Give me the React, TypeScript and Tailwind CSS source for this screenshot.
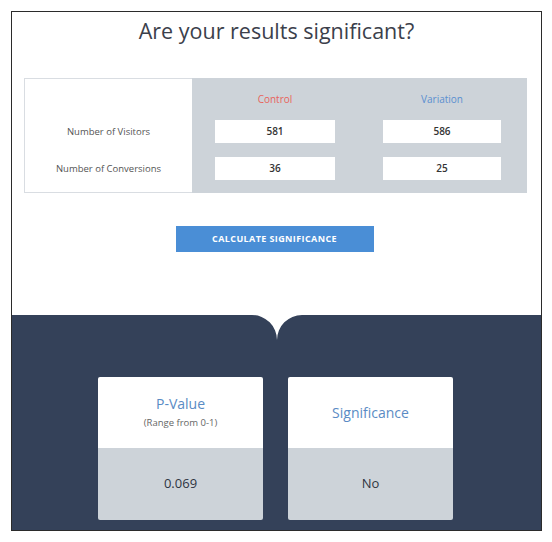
const font = { fontFamily: '"Open Sans", "Noto Sans", sans-serif' }

function ValueBox({ value, w }: { value: string; w: string }) {
  return (
    <div className={`flex h-[23px] items-center justify-center bg-white text-[10px] font-semibold text-[#333] ${w}`}>
      {value}
    </div>
  )
}

function ResultCard({ title, sub, value }: { title: string; sub?: string; value: string }) {
  return (
    <div className="flex h-[143px] w-[165px] flex-col overflow-hidden rounded-[2px]">
      <div className="flex h-[71px] flex-col items-center justify-center bg-white">
        <span className="text-[14px] leading-none text-[#5a8bc4]">{title}</span>
        {sub ? <span className="mt-[7px] text-[9.5px] leading-none text-[#666]">{sub}</span> : null}
      </div>
      <div className="flex flex-1 items-center justify-center bg-[#cdd3d9] text-[13px] text-[#2f3542]">
        {value}
      </div>
    </div>
  )
}

export default function App() {
  return (
    <div className="min-h-[542px] w-[552px] bg-white pl-[11px] pt-[11px]" style={font}>
      <div className="flex h-[520px] w-[531px] flex-col border border-[#2b2b2b] bg-white">
        <h1 className="mt-[5px] text-center text-[21.5px] leading-[28px] text-[#3b404b]">
          Are your results significant?
        </h1>
        <div className="ml-[12px] mt-[33px] flex h-[115px] w-[503px]">
          <div className="flex w-[168px] flex-col items-center border border-r-0 border-[#d9dde2] pt-[46px] text-[9.5px] text-[#555]">
            <span className="leading-[14px]">Number of Visitors</span>
            <span className="mt-[23px] leading-[14px]">Number of Conversions</span>
          </div>
          <div className="flex flex-1 gap-[48px] bg-[#cdd3d9] pl-[23px] pt-[14px]">
            <div className="flex flex-col items-center">
              <span className="text-[10px] leading-[14px] text-[#e8645c]">Control</span>
              <div className="mt-[14px]"><ValueBox value="581" w="w-[120px]" /></div>
              <div className="mt-[14px]"><ValueBox value="36" w="w-[120px]" /></div>
            </div>
            <div className="flex flex-col items-center">
              <span className="text-[10px] leading-[14px] text-[#5a8fd0]">Variation</span>
              <div className="mt-[14px]"><ValueBox value="586" w="w-[118px]" /></div>
              <div className="mt-[14px]"><ValueBox value="25" w="w-[118px]" /></div>
            </div>
          </div>
        </div>
        <div className="mt-[33px] flex justify-center pr-[4px]">
          <button className="h-[26px] w-[198px] bg-[#4a8ed6] text-[9px] font-bold tracking-[0.4px] text-white">
            CALCULATE SIGNIFICANCE
          </button>
        </div>
        <div className="relative mt-[63px] flex flex-1 justify-center gap-[25px] bg-[#344159] pr-[2px] pt-[62px]">
          <svg className="absolute left-1/2 top-0 -translate-x-1/2" width="50" height="25" viewBox="0 0 50 25">
            <path d="M0 0 A25 25 0 0 1 25 25 A25 25 0 0 1 50 0 Z" fill="#fff" />
          </svg>
          <ResultCard title="P-Value" sub="(Range from 0-1)" value="0.069" />
          <ResultCard title="Significance" value="No" />
        </div>
      </div>
    </div>
  )
}
